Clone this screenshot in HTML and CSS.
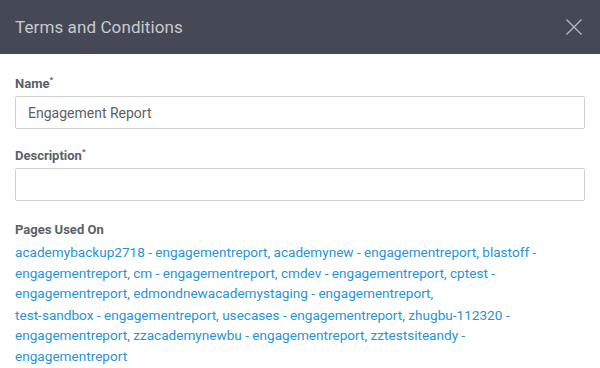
FILE: index.html
```html
<!DOCTYPE html>
<html lang="en">
<head>
  <meta charset="UTF-8">
  <title>Terms and Conditions</title>
  <link rel="stylesheet" href="styles.css">
</head>
<body>
  <div class="modal">
    <div class="modal-header">
      <h2>Terms and Conditions</h2>
      <button class="close" aria-label="Close">
        <svg width="16" height="16" viewBox="0 0 16 16"><path d="M0.5 0.5 L15.5 15.5 M15.5 0.5 L0.5 15.5" stroke="#b3b6bd" stroke-width="1.4" fill="none"/></svg>
      </button>
    </div>
    <div class="modal-body">
      <div class="field">
        <label for="name">Name<sup>*</sup></label>
        <input id="name" type="text" value="Engagement Report">
      </div>
      <div class="field">
        <label for="desc">Description<sup>*</sup></label>
        <input id="desc" type="text">
      </div>
      <div class="field pages-field">
        <label>Pages Used On</label>
        <p class="pages">academybackup2718 - engagementreport, academynew - engagementreport, blastoff -<br>engagementreport, cm - engagementreport, cmdev - engagementreport, cptest -<br>engagementreport, edmondnewacademystaging - engagementreport,</p>
        <p class="pages">test-sandbox - engagementreport, usecases - engagementreport, zhugbu-112320 -<br>engagementreport, zzacademynewbu - engagementreport, zztestsiteandy -<br>engagementreport</p>
      </div>
    </div>
  </div>
</body>
</html>
```

FILE: styles.css
```css
body { margin: 0; font-family: Roboto, 'Noto Sans', sans-serif; background: #fff; }
.modal { width: 600px; height: 368px; overflow: hidden; background: #fff; }
.modal-header { height: 54px; background: #454855; display: flex; align-items: center; justify-content: space-between; padding: 0 18px 0 15px; }
.modal-header h2 { margin: 0; font-size: 17px; font-weight: 400; color: #c9cace; letter-spacing: 0.1px; }
.close { border: none; background: none; padding: 0; width: 16px; height: 16px; cursor: pointer; display: flex; }
.modal-body { padding: 22px 15px 0 15px; }
.field { margin-bottom: 19px; }
.pages-field { padding-top: 2px; }
label { display: block; font-size: 13px; font-weight: 700; color: #5b5f66; margin-bottom: 5px; }
label sup { font-size: 8px; vertical-align: 6px; line-height: 0; }
input { box-sizing: border-box; width: 100%; height: 33px; border: 1px solid #cfcfcf; border-radius: 2px; padding: 0 12px; font-family: inherit; font-size: 14px; color: #5b5f66; outline: none; }
.pages { margin: 0; font-size: 13.6px; line-height: 20.5px; color: #2a93d5; }
.pages + .pages { margin-top: 1px; }
```
